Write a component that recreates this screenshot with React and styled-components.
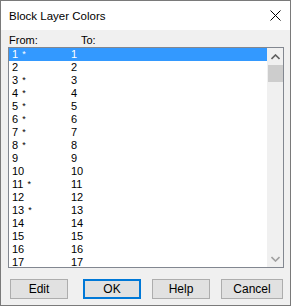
import React from 'react';
import styled, { createGlobalStyle } from 'styled-components';

const GlobalStyle = createGlobalStyle`
  html, body {
    margin: 0;
    padding: 0;
    background: #ffffff;
  }
  * {
    box-sizing: border-box;
  }
`;

const rows = [
  { from: '1', mark: true },
  { from: '2' },
  { from: '3', mark: true },
  { from: '4', mark: true },
  { from: '5', mark: true },
  { from: '6', mark: true },
  { from: '7', mark: true },
  { from: '8', mark: true },
  { from: '9' },
  { from: '10' },
  { from: '11', mark: true },
  { from: '12' },
  { from: '13', mark: true },
  { from: '14' },
  { from: '15' },
  { from: '16' },
  { from: '17' },
];

export default function App() {
  return (
    <>
      <GlobalStyle />
      <Window>
        <TitleBar>
          <Title>Block Layer Colors</Title>
          <CloseButton>
            <svg width="11" height="11" viewBox="0 0 11 11">
              <path d="M0.5 0.5 L10.5 10.5 M10.5 0.5 L0.5 10.5" stroke="#000" strokeWidth="1" fill="none" />
            </svg>
          </CloseButton>
        </TitleBar>
        <Body>
          <Labels>
            <FromLabel>From:</FromLabel>
            <span>To:</span>
          </Labels>
          <ListBox>
            <Rows>
              {rows.map((r, i) => (
                <Row key={r.from} selected={i === 0}>
                  <FromCell>{r.from}{r.mark && <Mark>*</Mark>}</FromCell>
                  <span>{r.from}</span>
                </Row>
              ))}
            </Rows>
            <ScrollBar>
              <ArrowButton>
                <svg width="9" height="6" viewBox="0 0 9 6">
                  <path d="M0.5 5 L4.5 1 L8.5 5" stroke="#606060" strokeWidth="1.6" fill="none" />
                </svg>
              </ArrowButton>
              <Thumb />
              <Track />
              <ArrowButton>
                <svg width="9" height="6" viewBox="0 0 9 6">
                  <path d="M0.5 1 L4.5 5 L8.5 1" stroke="#a0a0a0" strokeWidth="1.6" fill="none" />
                </svg>
              </ArrowButton>
            </ScrollBar>
          </ListBox>
          <Buttons>
            <Button>Edit</Button>
            <Button primary space={15}>OK</Button>
            <Button space={11}>Help</Button>
            <Button wide space={11}>Cancel</Button>
          </Buttons>
        </Body>
      </Window>
    </>
  );
}

const Window = styled.div`
  width: 291px;
  height: 306px;
  border: 1px solid #7a7a7a;
  background: #f0f0f0;
  display: flex;
  flex-direction: column;
  font-family: "Liberation Sans", Arial, sans-serif;
`;

const TitleBar = styled.div`
  height: 29px;
  background: #ffffff;
  display: flex;
  align-items: center;
  justify-content: space-between;
  padding: 0 8px 0 8px;
`;

const Title = styled.span`
  font-size: 11.5px;
  color: #000;
  margin-top: 1px;
`;

const CloseButton = styled.div`
  width: 11px;
  height: 11px;
  display: flex;
  margin-right: 1px;
`;

const Body = styled.div`
  flex: 1;
  display: flex;
  flex-direction: column;
  padding: 4px 6px 0 7px;
  font-size: 11px;
  color: #000;
`;

const Labels = styled.div`
  display: flex;
  height: 13px;
  line-height: 13px;
  padding-left: 1px;
`;

const FromLabel = styled.span`
  width: 72px;
`;

const ListBox = styled.div`
  height: 221px;
  border: 1px solid #828790;
  background: #ffffff;
  display: flex;
  overflow: hidden;
`;

const Rows = styled.div`
  flex: 1;
  display: flex;
  flex-direction: column;
`;

const Row = styled.div`
  flex: none;
  height: 13px;
  line-height: 13px;
  display: flex;
  padding-left: 3px;
  background: ${p => (p.selected ? '#3399ff' : 'transparent')};
  color: ${p => (p.selected ? '#ffffff' : '#000000')};
`;

const FromCell = styled.span`
  width: 59px;
`;

const Mark = styled.span`
  margin-left: 4px;
  font-size: 9px;
  vertical-align: top;
`;

const ScrollBar = styled.div`
  width: 16px;
  background: #f0f0f0;
  display: flex;
  flex-direction: column;
`;

const ArrowButton = styled.div`
  height: 17px;
  display: flex;
  align-items: center;
  justify-content: center;
`;

const Thumb = styled.div`
  height: 17px;
  margin: 0 0 0 1px;
  background: #cdcdcd;
`;

const Track = styled.div`
  flex: 1;
`;

const Buttons = styled.div`
  display: flex;
  align-items: center;
  padding-left: 2px;
  margin-top: 11px;
`;

const Button = styled.div`
  width: ${p => (p.wide ? '62px' : '58px')};
  height: 20px;
  margin-left: ${p => p.space || 0}px;
  display: flex;
  align-items: center;
  justify-content: center;
  background: #e1e1e1;
  border: ${p => (p.primary ? '2px solid #0078d7' : '1px solid #adadad')};
  font-size: 12px;
  color: #000;
`;
